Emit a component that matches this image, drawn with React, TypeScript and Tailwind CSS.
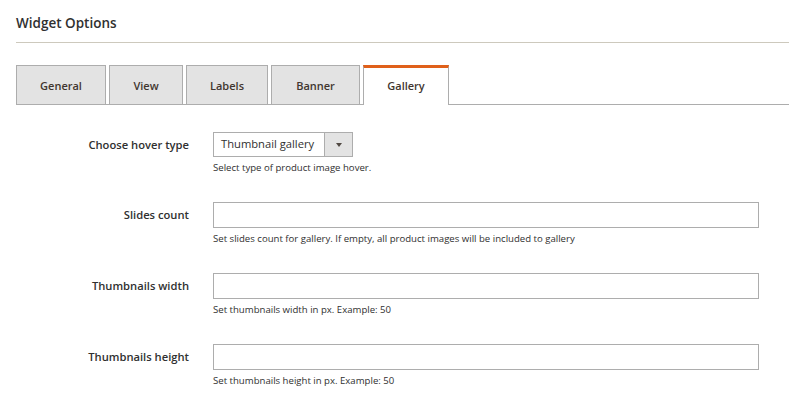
import type { FC } from "react";

// --- 탭 / 폼 데이터 ---
const TABS = ["General", "View", "Labels", "Banner", "Gallery"];
const TAB_WIDTHS: Record<string, string> = {
  General: "w-[90px]",
  View: "w-[74px]",
  Labels: "w-[82px]",
  Banner: "w-[89px]",
  Gallery: "w-[86px]",
};

const TEXT_FIELDS = [
  {
    label: "Slides count",
    note: "Set slides count for gallery. If empty, all product images will be included to gallery",
  },
  { label: "Thumbnails width", note: "Set thumbnails width in px. Example: 50" },
  { label: "Thumbnails height", note: "Set thumbnails height in px. Example: 50" },
];

const Row: FC<{ label: string; note: string; children: React.ReactNode }> = ({
  label,
  note,
  children,
}) => (
  <div className="flex items-start">
    <div className="w-[189px] shrink-0 h-[26px] flex items-center justify-end text-[11.2px] font-semibold text-[#303030]">
      {label}
    </div>
    <div className="ml-[24px] flex-1 mr-[30px]">
      {children}
      <p className="mt-[4px] text-[9.6px] leading-[14px] text-[#303030]">{note}</p>
    </div>
  </div>
);

export default function App() {
  return (
    <div
      className="w-[789px] h-[408px] bg-white overflow-hidden"
      style={{ fontFamily: '"Open Sans", "Liberation Sans", sans-serif' }}
    >
      <div className="pl-[16px]">
        <h2 className="pt-[13px] h-[42px] text-[13.5px] font-semibold text-[#303030] leading-[20px]">
          Widget Options
        </h2>
        <div className="h-px bg-[#cdc9bd]" />

        {/* 탭 */}
        <div className="mt-[22px] flex items-end gap-[3px] border-b border-[#adadad]">
          {TABS.map((tab) => {
            const active = tab === "Gallery";
            return (
              <div
                key={tab}
                className={`${TAB_WIDTHS[tab]} flex items-center justify-center text-[11px] font-semibold text-[#41362f] ${
                  active
                    ? "h-[40px] -mb-px bg-white border-x border-[#adadad] border-t-[3px] border-t-[#e0601a]"
                    : "h-[39px] pt-[2px] bg-[#e3e3e3] border border-b-0 border-[#adadad]"
                }`}
              >
                {tab}
              </div>
            );
          })}
        </div>
      </div>

      {/* 폼 */}
      <div className="mt-[27px] flex flex-col gap-[27px]">
        <Row label="Choose hover type" note="Select type of product image hover.">
          <div className="flex w-[140px] h-[25px] border border-[#adadad] bg-white">
            <div className="flex-1 flex items-center pl-[7px] text-[11.2px] text-[#303030]">
              Thumbnail gallery
            </div>
            <div className="w-[28px] flex items-center justify-center bg-[#e3e3e3] border-l border-[#adadad]">
              <svg width="6" height="4" viewBox="0 0 6 4">
                <path d="M0 0h6L3 4z" fill="#514943" />
              </svg>
            </div>
          </div>
        </Row>
        {TEXT_FIELDS.map((f) => (
          <Row key={f.label} label={f.label} note={f.note}>
            <input
              type="text"
              className="block w-full h-[26px] border border-[#adadad] bg-white outline-none"
            />
          </Row>
        ))}
      </div>
    </div>
  );
}
